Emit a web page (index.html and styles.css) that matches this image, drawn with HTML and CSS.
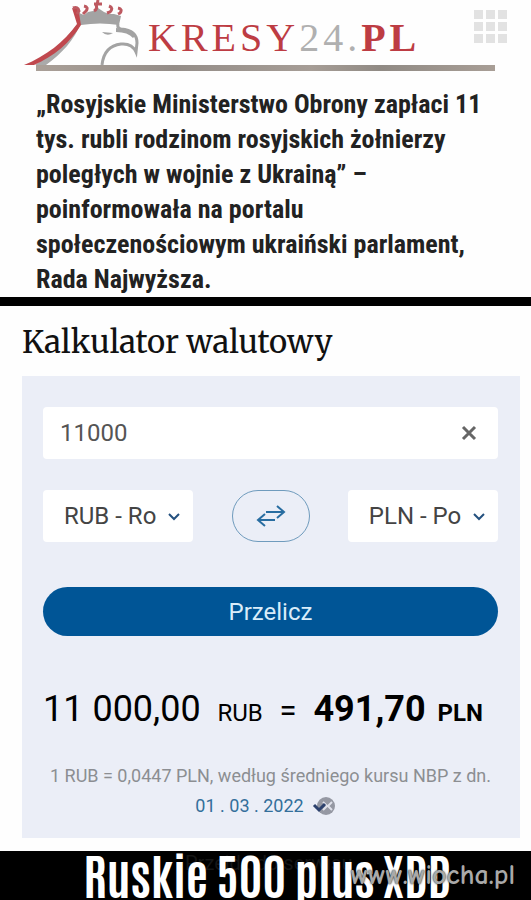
FILE: index.html
```html
<!DOCTYPE html>
<html lang="pl">
<head>
<meta charset="UTF-8">
<meta name="viewport" content="width=device-width, initial-scale=1.0">
<title>Kalkulator walutowy</title>
<link rel="stylesheet" href="styles.css">
</head>
<body>

<header class="header">
<svg class="eagle" viewBox="0 0 140 65" aria-hidden="true">
<path d="M81 22C75 40 61 54 46 65H35C54 52 68 37 79 22Z" fill="#aaa"/>
<path d="M24 65C46 56 64 42 77 24L72 8L77 9L84 20L81 25C70 43 54 56 34 65Z" fill="#c0484e"/>
<path d="M81 25L79 13L84 15L88 12L93 11L98 8L104 12L109 14L114 14L121 16L119 25Q100 22 81 25Z" fill="#a3a3a3"/>
<path d="M73 8Q78 6 79 11L77 14M84 6Q89 7 86 11L83 14M98 0L97 5M94 4H102M96 5Q98 9 94 11M109 6Q114 8 110 12L107 13M118 8Q123 9 120 13L118 14" fill="none" stroke="#bd5960" stroke-width="3"/>
<path d="M118 24Q117 28 121 29Q137 30 137 43L136 52Q132 43 121 44Q104 46 102 65" fill="none" stroke="#a3a3a3" stroke-width="3"/>
<path d="M116 28Q130 29 135 36L133 38Q128 32 116 32Z" fill="#a3a3a3"/>
<path d="M102 32L113 33Q107 37 102 32Z" fill="#a3a3a3"/>
</svg>
<a class="brand" href="#">KRESY<span class="brand-num">24.</span><b>PL</b></a>
<button class="menu" type="button" aria-label="Menu">
<i></i><i></i><i></i><i></i><i></i><i></i><i></i><i></i><i></i>
</button>
</header>

<article class="news">
<div class="photo"></div>
<p class="lead">„Rosyjskie Ministerstwo Obrony zapłaci 11 tys. rubli rodzinom rosyjskich żołnierzy poległych w wojnie z Ukrainą” – poinformowała na portalu społeczenościowym ukraiński parlament, Rada Najwyższa.</p>
</article>

<main class="calculator">
<h1 class="title">Kalkulator walutowy</h1>
<form class="card">
<div class="amount">
<input class="input" type="text" id="amount" value="11000" aria-label="Kwota">
<button class="clear" type="button" aria-label="Wyczyść">
<svg width="16" height="16" viewBox="0 0 16 16"><path d="M2 2L14 14M14 2L2 14" stroke="#666" stroke-width="3"/></svg>
</button>
</div>

<div class="currencies">
<label class="currency">
<select class="select" aria-label="Z waluty"><option>RUB - Ro</option></select>
<svg class="chevron" width="14" height="10" viewBox="0 0 14 10"><path d="M2 2L7 7L12 2"/></svg>
</label>
<button class="swap" type="button" aria-label="Zamień waluty">
<svg width="30" height="24" viewBox="0 0 30 24"><path d="M10 8H28M21 2L28 8L21 14M19 16H2M9 10L2 16L9 22"/></svg>
</button>
<label class="currency">
<select class="select" aria-label="Na walutę"><option>PLN - Po</option></select>
<svg class="chevron" width="14" height="10" viewBox="0 0 14 10"><path d="M2 2L7 7L12 2"/></svg>
</label>
</div>

<button class="submit" type="button">Przelicz</button>

<p class="result">
<span class="value">11 000,00</span>
<span class="code">RUB</span>
<span class="equals">=</span>
<b class="total"><span class="value">491,70</span> <span class="code">PLN</span></b>
</p>

<p class="rate">1 RUB = 0,0447 PLN, według średniego kursu NBP z dn.</p>
<p class="date"><a href="#">01 . 03 . 2022</a>
<svg width="24" height="20" viewBox="0 0 24 20" aria-hidden="true"><circle cx="14" cy="10" r="9" fill="#9598a3"/><path d="M11 6L15 10L11 14M20 6L16 10L20 14" fill="none" stroke="#dfe1ea" stroke-width="2"/><path d="M2 9L7 14L13 8" fill="none" stroke="#2c416d" stroke-width="3"/></svg>
</p>
</form>
</main>

<footer class="footer">
<span class="service">Przejdź do serwisu</span>
<p class="caption">Ruskie 500 plus XDD</p>
<span class="watermark">www.wiocha.pl</span>
</footer>

</body>
</html>
```

FILE: styles.css
```css
* {
    box-sizing: border-box;
}

body {
    margin: 0;
    min-height: 100vh;
    display: flex;
    flex-direction: column;
    background-color: #fefefe;
    font-family: Roboto, sans-serif;
    color: #111;
}

p, h1 {
    margin: 0;
}

button {
    border: none;
    padding: 0;
    background: none;
    font-family: inherit;
    cursor: pointer;
}

.header {
    display: flex;
    align-items: flex-start;
    height: 65px;
    padding-right: 24px;
}

.eagle {
    width: 140px;
    height: 65px;
}

.brand {
    flex: 1;
    padding: 12px 0 0 8px;
    font-family: "Liberation Serif", serif;
    font-size: 40px;
    line-height: 52px;
    letter-spacing: 4px;
    color: #bd3c43;
    text-decoration: none;
    white-space: nowrap;
}

.brand-num {
    color: #b0b0b0;
}

.menu {
    display: grid;
    grid-template-columns: repeat(3, 9px);
    gap: 3px;
    margin-top: 10px;
}

.menu i {
    height: 9px;
    background-color: #e2e2e2;
}

.news {
    padding: 0 36px;
    border-bottom: 9px solid #000;
}

.photo {
    height: 6px;
    background: linear-gradient(90deg, #aaa098, #948d88 30%, #a69d96 60%, #908a84 75%, #a89e96);
}

.lead {
    padding-top: 16px;
    font-family: "Roboto Condensed", "Liberation Sans Narrow", sans-serif;
    font-size: 26px;
    font-weight: 700;
    line-height: 35px;
    color: #222;
}

.calculator {
    flex: 1;
    padding: 12px 11px 12px 22px;
}

.title {
    padding-bottom: 10px;
    font-family: Merriweather, "DejaVu Serif Condensed", serif;
    font-size: 31px;
    font-weight: 400;
    line-height: 48px;
}

.card {
    padding: 31px 22px 20px 21px;
    background-color: #ebeef7;
}

.amount {
    display: flex;
    height: 52px;
    border-radius: 4px;
    background-color: #fff;
}

.input {
    flex: 1;
    min-width: 0;
    border: none;
    outline: none;
    padding: 0 17px;
    background: none;
    font-family: inherit;
    font-size: 24px;
    color: #555;
}

.clear {
    display: grid;
    place-items: center;
    width: 58px;
}

.currencies {
    display: flex;
    justify-content: space-between;
    margin: 31px 0 45px;
}

.currency {
    position: relative;
    width: 33%;
}

.select {
    appearance: none;
    width: 100%;
    height: 52px;
    border: none;
    border-radius: 4px;
    padding: 0 21px;
    background-color: #fff;
    font-family: inherit;
    font-size: 24px;
    color: #444;
}

.chevron {
    position: absolute;
    right: 12px;
    top: 22px;
    fill: none;
    stroke: #24517f;
    stroke-width: 2;
    pointer-events: none;
}

.swap {
    display: grid;
    place-items: center;
    width: 78px;
    height: 52px;
    border: 1px solid #6f9bbd;
    border-radius: 26px;
}

.swap svg {
    fill: none;
    stroke: #286da1;
    stroke-width: 2;
}

.submit {
    width: 100%;
    height: 49px;
    border-radius: 25px;
    background-color: #005596;
    font-size: 24px;
    color: #d9edfa;
}

.result {
    display: flex;
    align-items: baseline;
    justify-content: space-between;
    padding: 49px 15px 27px 0;
    line-height: 48px;
    color: #000;
    white-space: nowrap;
}

.total {
    display: flex;
    align-items: baseline;
    gap: 12px;
}

.value {
    font-size: 36px;
}

.code {
    font-size: 24px;
}

.equals {
    font-size: 31px;
}

.rate {
    font-size: 18px;
    line-height: 24px;
    text-align: center;
    color: #8c8e92;
}

.date {
    display: flex;
    align-items: center;
    justify-content: center;
    gap: 8px;
    padding-top: 6px;
    padding-right: 10px;
    font-size: 18px;
    line-height: 24px;
}

.date a {
    color: #336f9b;
    text-decoration: none;
}

.footer {
    position: relative;
    height: 49px;
    background-color: #000;
    overflow: hidden;
}

.caption {
    position: relative;
    padding-left: 4px;
    font-family: Antonio, Anton, Oswald, "Roboto Condensed", "Liberation Sans Narrow", sans-serif;
    font-size: 48px;
    font-weight: 700;
    line-height: 46px;
    text-align: center;
    color: #fff;
    white-space: nowrap;
}

.service {
    position: absolute;
    left: 185px;
    top: 0;
    font-size: 20px;
    color: #161616;
}

.watermark {
    position: absolute;
    right: 16px;
    top: 8px;
    font-family: "Comic Neue", "DejaVu Sans", sans-serif;
    font-size: 28px;
    font-weight: 700;
    color: #a9a9a9;
    text-shadow: 0 0 2px #000;
}
```
